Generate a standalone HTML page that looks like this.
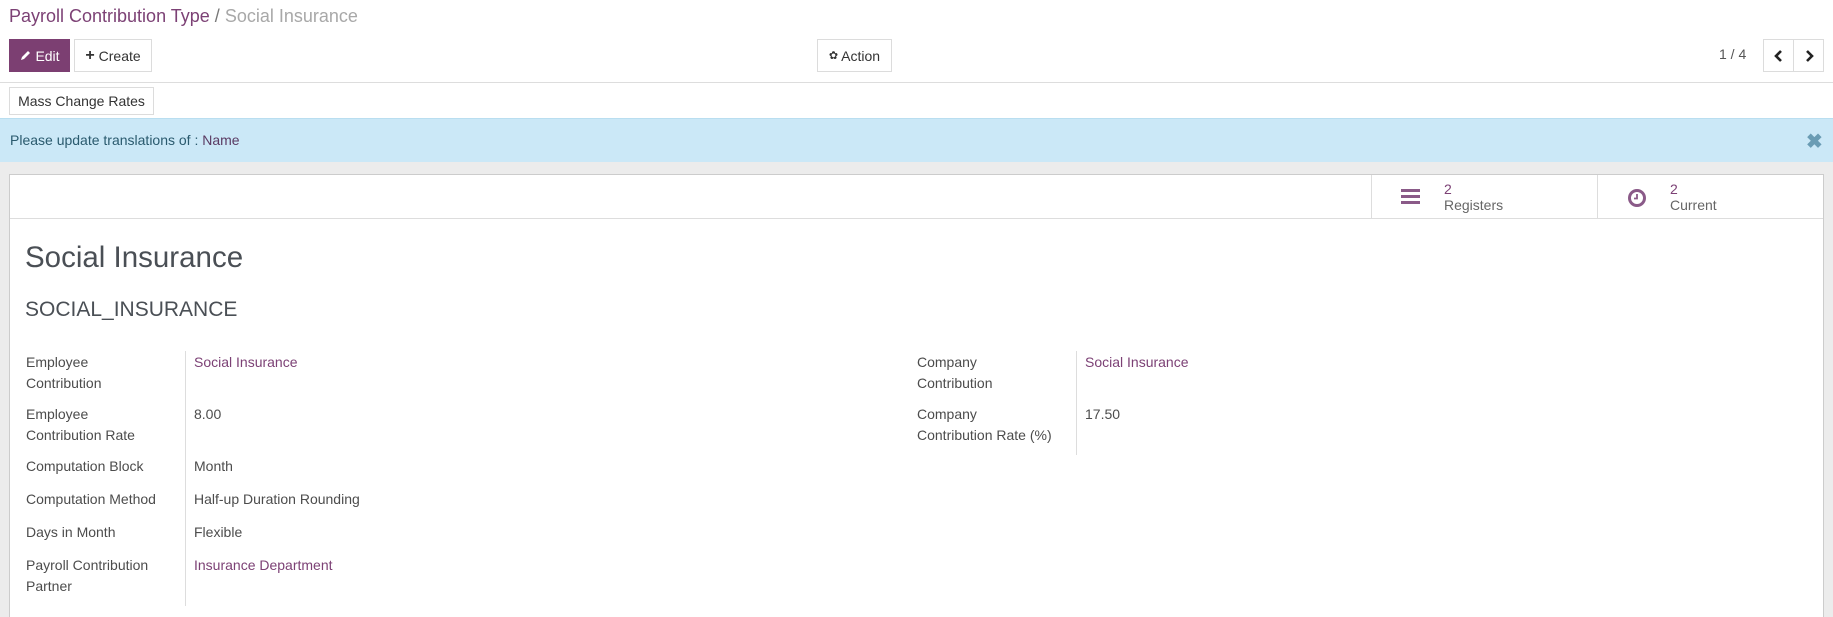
<!DOCTYPE html>
<html><head><meta charset="utf-8"><style>
*{box-sizing:border-box;margin:0;padding:0}
body{width:1833px;height:617px;overflow:hidden;background:#fff;font-family:"Liberation Sans",sans-serif;color:#4c4c4c;font-size:14px;position:relative}
.a{position:absolute;white-space:nowrap}
.btn{position:absolute;border:1px solid #dcdcdc;background:#fff;color:#333;font-size:14px;display:flex;align-items:center;justify-content:center}
.lbl{position:absolute;font-size:14px;color:#4c4c4c;line-height:21px;font-weight:500}
.val{position:absolute;font-size:14px;color:#4c4c4c;line-height:21px}
.lnk{color:#7c4175}
</style></head><body>
<div class="a" style="left:9px;top:6px;font-size:18px;color:#7c4175">Payroll Contribution Type <span style="color:#777">/</span> <span style="color:#a8a8a8">Social Insurance</span></div>
<div class="btn" style="left:9px;top:39px;width:61px;height:33px;background:#7c3f72;border-color:#7c3f72;color:#fff">
<svg width="13" height="13" viewBox="0 0 13 13" style="margin-right:3px"><path d="M2 11 L3 8 L9 2 L11 4 L5 10 Z" fill="#fff"/></svg>Edit</div>
<div class="btn" style="left:74px;top:39px;width:78px;height:33px"><b style="font-size:16px;margin-right:4px">+</b>Create</div>
<div class="btn" style="left:817px;top:39px;width:75px;height:33px"><span style="font-size:11px;margin-right:3px">✿</span>Action</div>
<div class="a" style="left:1719px;top:46px;font-size:14px;color:#555">1 / 4</div>
<div class="btn" style="left:1763px;top:39px;width:31px;height:33px"><svg width="10" height="12" viewBox="0 0 10 12"><path d="M7 1 L2 6 L7 11" stroke="#222" stroke-width="2.6" fill="none"/></svg></div>
<div class="btn" style="left:1793px;top:39px;width:31px;height:33px"><svg width="10" height="12" viewBox="0 0 10 12"><path d="M3 1 L8 6 L3 11" stroke="#222" stroke-width="2.6" fill="none"/></svg></div>
<div class="a" style="left:0;top:82px;width:1833px;height:1px;background:#ddd"></div>
<div class="btn" style="left:9px;top:87px;width:145px;height:28px;color:#333">Mass Change Rates</div>
<div class="a" style="left:0;top:118px;width:1833px;height:44px;background:#cbe8f7;border-top:1px solid #b9def0"></div>
<div class="a" style="left:10px;top:132px;font-size:14px;color:#2a5a6e">Please update translations of : <span style="color:#5a3a62">Name</span></div>
<div class="a" style="left:1806px;top:129px;font-size:20px;color:#6a9cb4;font-weight:bold">✖</div>
<div class="a" style="left:0;top:162px;width:1833px;height:455px;background:#ececec"></div>
<div class="a" style="left:9px;top:174px;width:1815px;height:443px;background:#fff;border:1px solid #ccc;border-bottom:none"></div>
<div class="a" style="left:10px;top:218px;width:1813px;height:1px;background:#ddd"></div>
<div class="a" style="left:1371px;top:175px;width:1px;height:43px;background:#ddd"></div>
<div class="a" style="left:1597px;top:175px;width:1px;height:43px;background:#ddd"></div>
<div class="a" style="left:1401px;top:189px;width:19px;height:3px;background:#8a5a88;box-shadow:0 6px 0 #8a5a88,0 12px 0 #8a5a88"></div>
<div class="a" style="left:1444px;top:181px;font-size:14px;color:#7c4175;line-height:16px">2<br><span style="color:#666">Registers</span></div>
<svg class="a" style="left:1627px;top:188px" width="20" height="20" viewBox="0 0 20 20"><circle cx="10" cy="10" r="7.5" stroke="#8a5a88" stroke-width="3" fill="none"/><path d="M10 6 V10.5 H7" stroke="#8a5a88" stroke-width="1.8" fill="none"/></svg>
<div class="a" style="left:1670px;top:181px;font-size:14px;color:#7c4175;line-height:16px">2<br><span style="color:#666">Current</span></div>
<div class="a" style="left:25px;top:241px;font-size:29.5px;color:#4a4f55">Social Insurance</div>
<div class="a" style="left:25px;top:298px;font-size:21px;color:#4a4f55">SOCIAL_INSURANCE</div>
<div class="a" style="left:185px;top:351px;width:1px;height:255px;background:#ddd"></div>
<div class="lbl" style="left:26px;top:352px">Employee<br>Contribution</div>
<div class="val lnk" style="left:194px;top:352px">Social Insurance</div>
<div class="lbl" style="left:26px;top:404px">Employee<br>Contribution Rate</div>
<div class="val" style="left:194px;top:404px">8.00</div>
<div class="lbl" style="left:26px;top:456px">Computation Block</div>
<div class="val" style="left:194px;top:456px">Month</div>
<div class="lbl" style="left:26px;top:489px">Computation Method</div>
<div class="val" style="left:194px;top:489px">Half-up Duration Rounding</div>
<div class="lbl" style="left:26px;top:522px">Days in Month</div>
<div class="val" style="left:194px;top:522px">Flexible</div>
<div class="lbl" style="left:26px;top:555px">Payroll Contribution<br>Partner</div>
<div class="val lnk" style="left:194px;top:555px">Insurance Department</div>
<div class="a" style="left:1076px;top:351px;width:1px;height:104px;background:#ddd"></div>
<div class="lbl" style="left:917px;top:352px">Company<br>Contribution</div>
<div class="val lnk" style="left:1085px;top:352px">Social Insurance</div>
<div class="lbl" style="left:917px;top:404px">Company<br>Contribution Rate (%)</div>
<div class="val" style="left:1085px;top:404px">17.50</div>
</body></html>
